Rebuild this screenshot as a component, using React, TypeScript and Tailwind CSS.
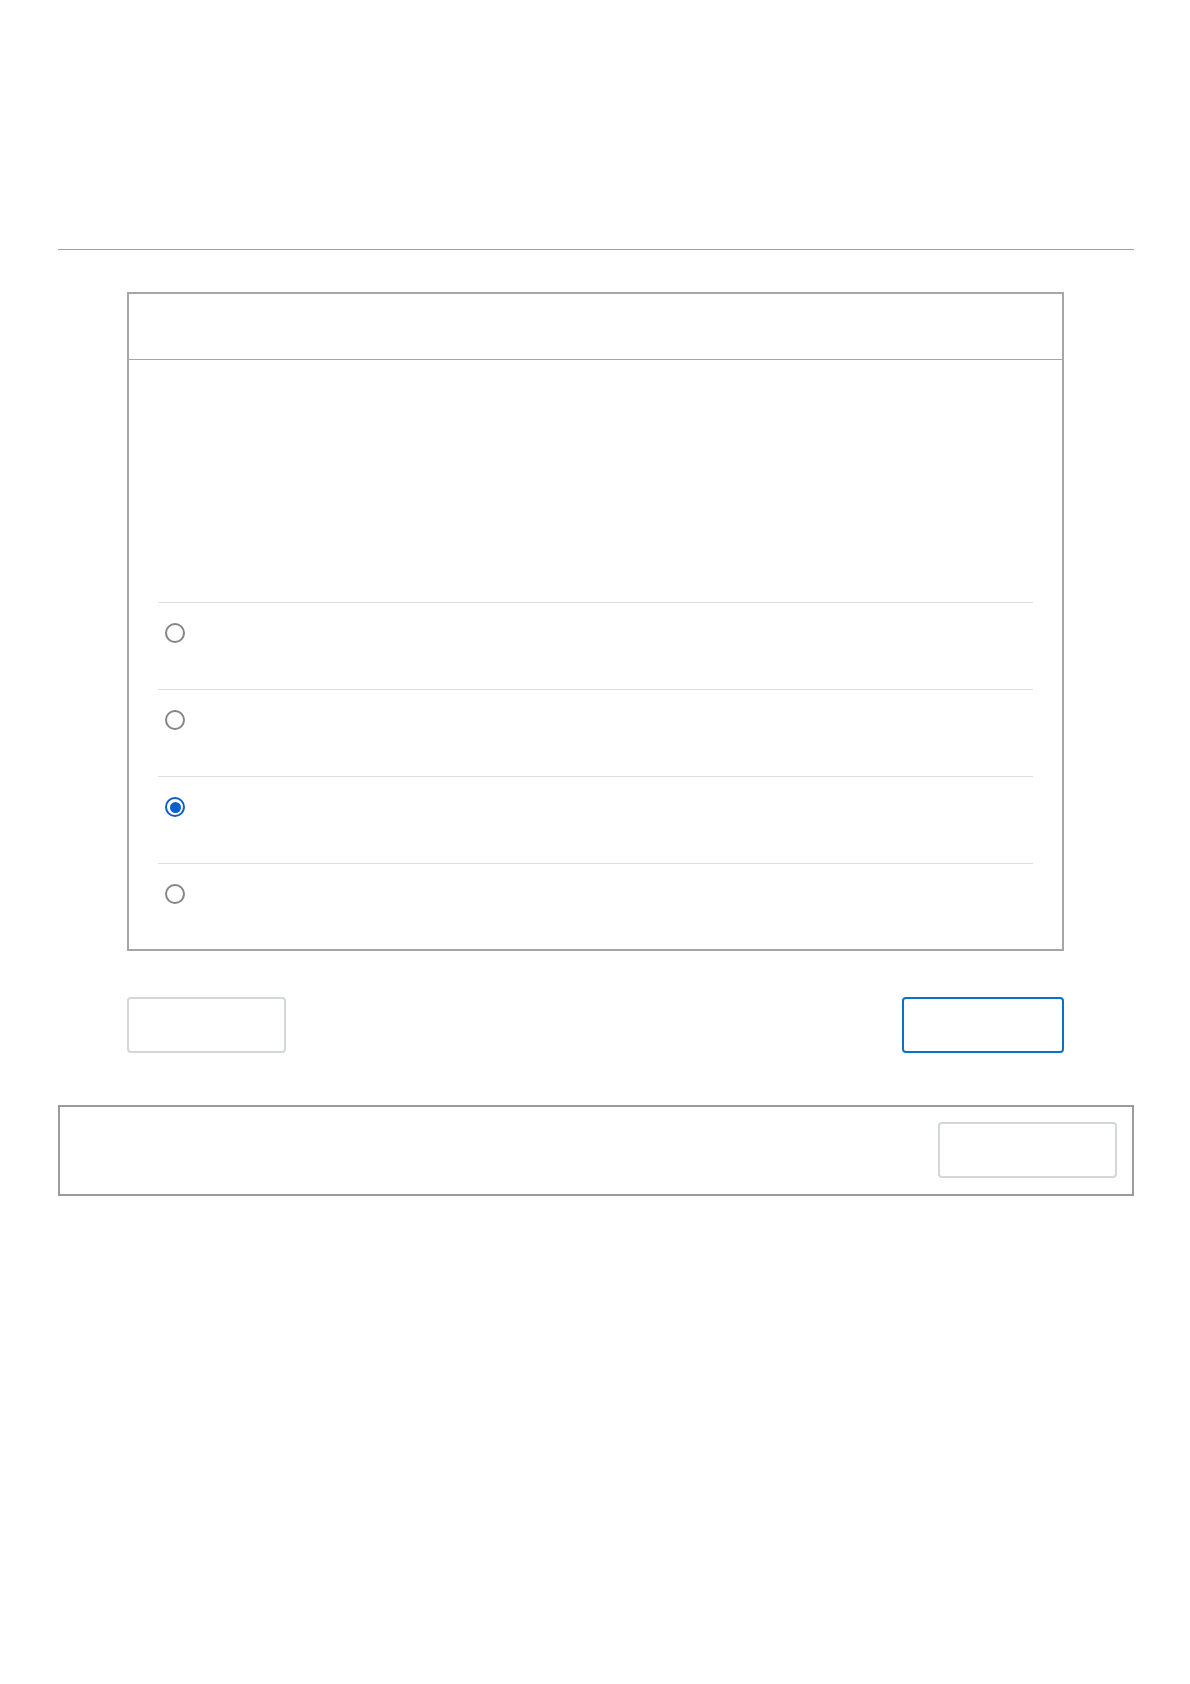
import React from "react";

const options = [0, 1, 2, 3];
const selected = 2;

function Radio({ checked }: { checked: boolean }) {
  if (checked) {
    return (
      <div className="w-[20px] h-[20px] rounded-full border-2 border-[#0b5fcc] flex items-center justify-center">
        <div className="w-[11px] h-[11px] rounded-full bg-[#0b5fcc]" />
      </div>
    );
  }
  return <div className="w-[20px] h-[20px] rounded-full border-2 border-[#858585] bg-white" />;
}

export default function App() {
  return (
    <div className="min-h-[1684px] bg-white font-['Liberation_Sans',sans-serif]">
      <div className="pl-[58px] pr-[56px] pt-[249px]">
        <div className="border-t border-[#a0a0a0]" />

        {/* question card */}
        <div className="ml-[69px] mr-[70px] mt-[42px] border-2 border-[#a6a6a6]">
          <div className="h-[66px] border-b border-[#a6a6a6]" />
          <div className="px-[29px] pt-[242px]">
            {options.map((o) => (
              <div
                key={o}
                className={
                  "border-t border-[#dedede] pt-[20px] pl-[7px] " +
                  (o === 3 ? "h-[86px]" : "h-[87px]")
                }
              >
                <Radio checked={o === selected} />
              </div>
            ))}
          </div>
        </div>

        {/* nav buttons */}
        <div className="ml-[69px] mr-[70px] mt-[46px] flex justify-between">
          <button className="w-[159px] h-[56px] rounded-[4px] border-2 border-[#d3d7db] bg-white" />
          <button className="w-[162px] h-[56px] rounded-[4px] border-2 border-[#0a72c6] bg-white" />
        </div>

        {/* footer bar */}
        <div className="mt-[52px] h-[91px] border-2 border-[#9b9b9b] flex justify-end items-start pt-[15px] pr-[15px]">
          <button className="w-[179px] h-[56px] rounded-[4px] border-2 border-[#d3d7db] bg-white" />
        </div>
      </div>
    </div>
  );
}
